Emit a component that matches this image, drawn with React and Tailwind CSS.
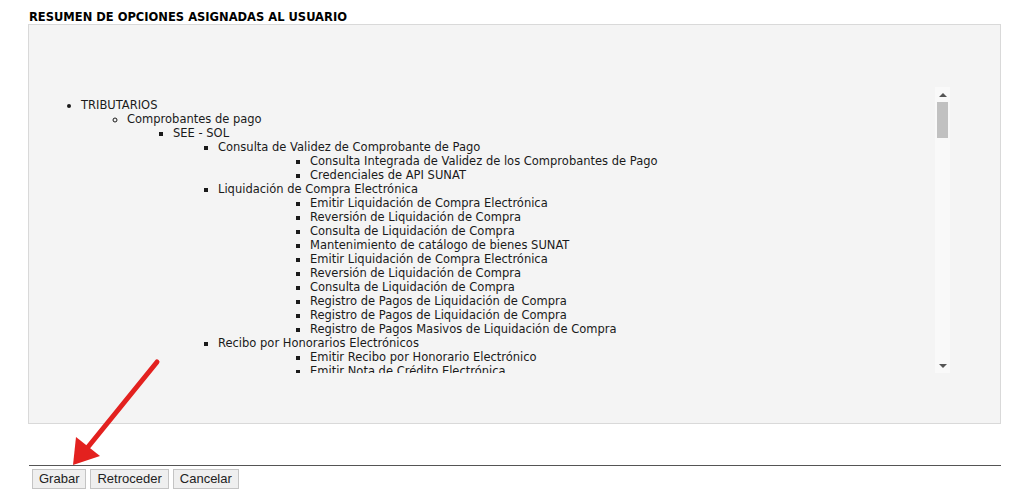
const tree = [
  {
    label: 'TRIBUTARIOS',
    children: [
      {
        label: 'Comprobantes de pago',
        children: [
          {
            label: 'SEE - SOL',
            groups: [
              {
                label: 'Consulta de Validez de Comprobante de Pago',
                items: [
                  'Consulta Integrada de Validez de los Comprobantes de Pago',
                  'Credenciales de API SUNAT',
                ],
              },
              {
                label: 'Liquidación de Compra Electrónica',
                items: [
                  'Emitir Liquidación de Compra Electrónica',
                  'Reversión de Liquidación de Compra',
                  'Consulta de Liquidación de Compra',
                  'Mantenimiento de catálogo de bienes SUNAT',
                  'Emitir Liquidación de Compra Electrónica',
                  'Reversión de Liquidación de Compra',
                  'Consulta de Liquidación de Compra',
                  'Registro de Pagos de Liquidación de Compra',
                  'Registro de Pagos de Liquidación de Compra',
                  'Registro de Pagos Masivos de Liquidación de Compra',
                ],
              },
              {
                label: 'Recibo por Honorarios Electrónicos',
                items: [
                  'Emitir Recibo por Honorario Electrónico',
                  'Emitir Nota de Crédito Electrónica',
                  'Consultar Recibo por Honorario Electrónico',
                  'Consultar Nota de Crédito Electrónica',
                  'Revertir Recibo por Honorario Electrónico',
                ],
              },
              {
                label: 'Factura Electrónica',
                items: [
                  'Emitir Factura',
                  'Emitir Nota de Crédito',
                  'Emitir Nota de Débito',
                  'Consultar Factura y Nota',
                  'Comunicación de Baja',
                ],
              },
            ],
          },
        ],
      },
    ],
  },
]

function Scrollbar() {
  return (
    <div className="flex w-[15px] shrink-0 flex-col items-center bg-[#f9f9f9]">
      <div className="flex h-[15px] w-full items-center justify-center">
        <div className="h-0 w-0 border-x-[4px] border-b-[4px] border-x-transparent border-b-[#555]" />
      </div>
      <div className="flex-1 w-full px-[2px]">
        <div className="h-[36px] w-full bg-[#c1c1c1]" />
      </div>
      <div className="flex h-[15px] w-full items-center justify-center">
        <div className="h-0 w-0 border-x-[4px] border-t-[4px] border-x-transparent border-t-[#555]" />
      </div>
    </div>
  )
}

function App() {
  return (
    <div className="relative h-[496px] w-[1024px] overflow-hidden bg-white px-[23px] pt-[10px] text-black">
      <h1
        className="ml-[6px] text-[11.5px] font-bold leading-[14px]"
        style={{ fontFamily: '"DejaVu Sans", Verdana, Tahoma, sans-serif' }}
      >
        RESUMEN DE OPCIONES ASIGNADAS AL USUARIO
      </h1>

      <div className="ml-[5px] h-[400px] w-[973px] border border-[#d9d9d9] bg-[#f4f4f4] pl-[10px] pr-[50px] pt-[62px]">
        <div className="flex h-[286px]">
          <div
            className="flex-1 overflow-hidden text-[11.5px] leading-[14px] text-[#1a1a1a]"
            style={{ fontFamily: '"DejaVu Sans", Verdana, Tahoma, sans-serif' }}
          >
            <ul className="my-[11px] list-disc pl-[42px]">
              {tree.map((top) => (
                <li key={top.label}>
                  {top.label}
                  <ul className="list-[circle] pl-[46px]">
                    {top.children.map((sec) => (
                      <li key={sec.label}>
                        {sec.label}
                        <ul className="list-[square] pl-[46px]">
                          {sec.children.map((mod) => (
                            <li key={mod.label}>
                              {mod.label}
                              <ul className="list-[square] pl-[45px]">
                                {mod.groups.map((g) => (
                                  <li key={g.label}>
                                    {g.label}
                                    <ul className="list-[square] pl-[92px]">
                                      {g.items.map((item, i) => (
                                        <li key={i}>{item}</li>
                                      ))}
                                    </ul>
                                  </li>
                                ))}
                              </ul>
                            </li>
                          ))}
                        </ul>
                      </li>
                    ))}
                  </ul>
                </li>
              ))}
            </ul>
          </div>
          <Scrollbar />
        </div>
      </div>

      <div className="ml-[6px] mt-[41px] h-px w-[972px] bg-[#555]" />

      <div
        className="ml-[9px] mt-[3px] flex gap-[4px] text-[13px]"
        style={{ fontFamily: '"Liberation Sans", Arial, sans-serif' }}
      >
        {['Grabar', 'Retroceder', 'Cancelar'].map((b) => (
          <button
            key={b}
            className="h-[20px] border border-[#c4c4c4] bg-[#efefef] px-[6px] leading-[18px] text-[#222]"
          >
            {b}
          </button>
        ))}
      </div>

      {/* red arrow pointing at Grabar */}
      <svg className="pointer-events-none absolute left-0 top-0" width="1024" height="496">
        <line x1="157" y1="362" x2="88" y2="447" stroke="#e3211f" strokeWidth="5" strokeLinecap="round" />
        <polygon points="73,465 76,437 100,456" fill="#e3211f" />
      </svg>
    </div>
  )
}

export default App
